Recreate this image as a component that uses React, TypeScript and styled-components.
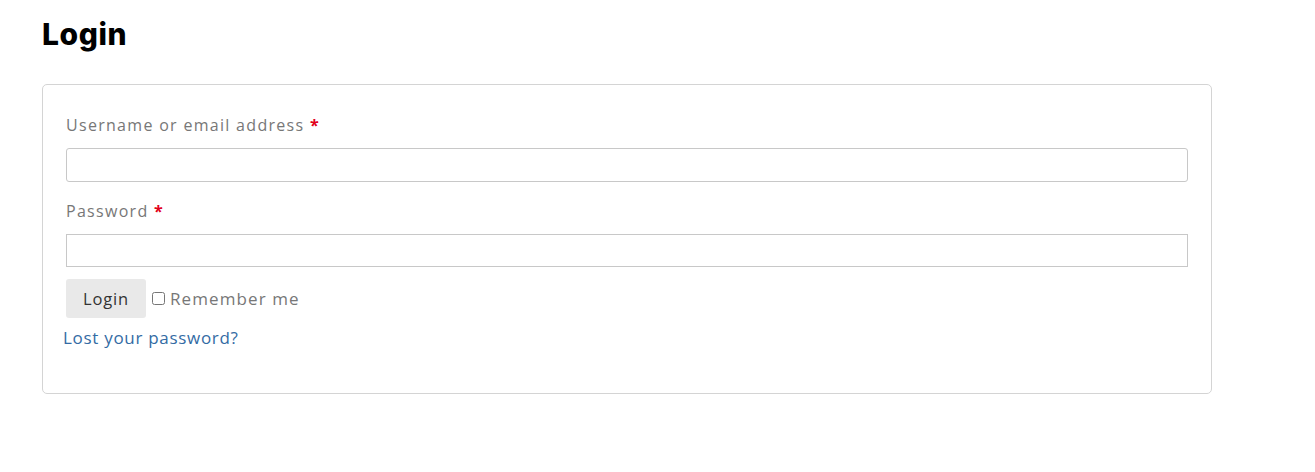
import styled, { createGlobalStyle } from "styled-components";

const GlobalStyle = createGlobalStyle`
  html, body {
    margin: 0;
    background: #ffffff;
  }
  body {
    font-family: "Open Sans", "Liberation Sans", sans-serif;
  }
`

const Page = styled.main`
  width: 1170px;
  padding: 14px 0 0 42px;
`

const Title = styled.h1`
  margin: 0 0 30px;
  font-family: Inter, "Open Sans", sans-serif;
  font-size: 30px;
  font-weight: 800;
  letter-spacing: 0.6px;
  line-height: 40px;
  color: #000;
`

const Card = styled.form`
  border: 1px solid #d4d4d4;
  border-radius: 5px;
  padding: 28px 23px 43px;
  display: flex;
  flex-direction: column;
`

const Label = styled.label`
  display: block;
  font-size: 16px;
  letter-spacing: 1.3px;
  line-height: 24px;
  color: #777777;
  margin-bottom: 11px;
`

const Required = styled.span`
  color: #e2001a;
  font-weight: 700;
`

const TextInput = styled.input<{ $rounded?: boolean }>`
  box-sizing: border-box;
  width: 100%;
  height: ${p => (p.$rounded ? 34 : 33)}px;
  border: 1px solid #c8c8c8;
  border-radius: ${p => (p.$rounded ? 3 : 0)}px;
  margin: 0 0 17px;
  font-size: 15px;
  outline: none;
`

const ActionRow = styled.div`
  display: flex;
  align-items: center;
  gap: 6px;
  margin-top: -5px;
`

const Button = styled.button`
  height: 39px;
  width: 80px;
  border: none;
  border-radius: 3px;
  background: #e9e9e9;
  color: #333333;
  font-family: inherit;
  font-size: 16.5px;
  letter-spacing: 0.8px;
  cursor: pointer;
`

const Remember = styled.label`
  display: flex;
  align-items: center;
  gap: 5px;
  font-size: 17px;
  letter-spacing: 1.1px;
  color: #777777;
`

const Check = styled.input`
  width: 13px;
  height: 13px;
  margin: 0;
`

const LostLink = styled.a`
  margin: 8px 0 0 -3px;
  font-size: 17px;
  letter-spacing: 0.7px;
  line-height: 24px;
  color: #336ba4;
  text-decoration: none;
`

export default function App() {
  return (
    <Page>
      <GlobalStyle />
      <Title>Login</Title>
      <Card onSubmit={e => e.preventDefault()}>
        <Label htmlFor="username">
          Username or email address <Required>*</Required>
        </Label>
        <TextInput id="username" type="text" $rounded />
        <Label htmlFor="password">
          Password <Required>*</Required>
        </Label>
        <TextInput id="password" type="password" />
        <ActionRow>
          <Button type="submit">Login</Button>
          <Remember>
            <Check type="checkbox" />
            Remember me
          </Remember>
        </ActionRow>
        <LostLink href="#">Lost your password?</LostLink>
      </Card>
    </Page>
  )
}
